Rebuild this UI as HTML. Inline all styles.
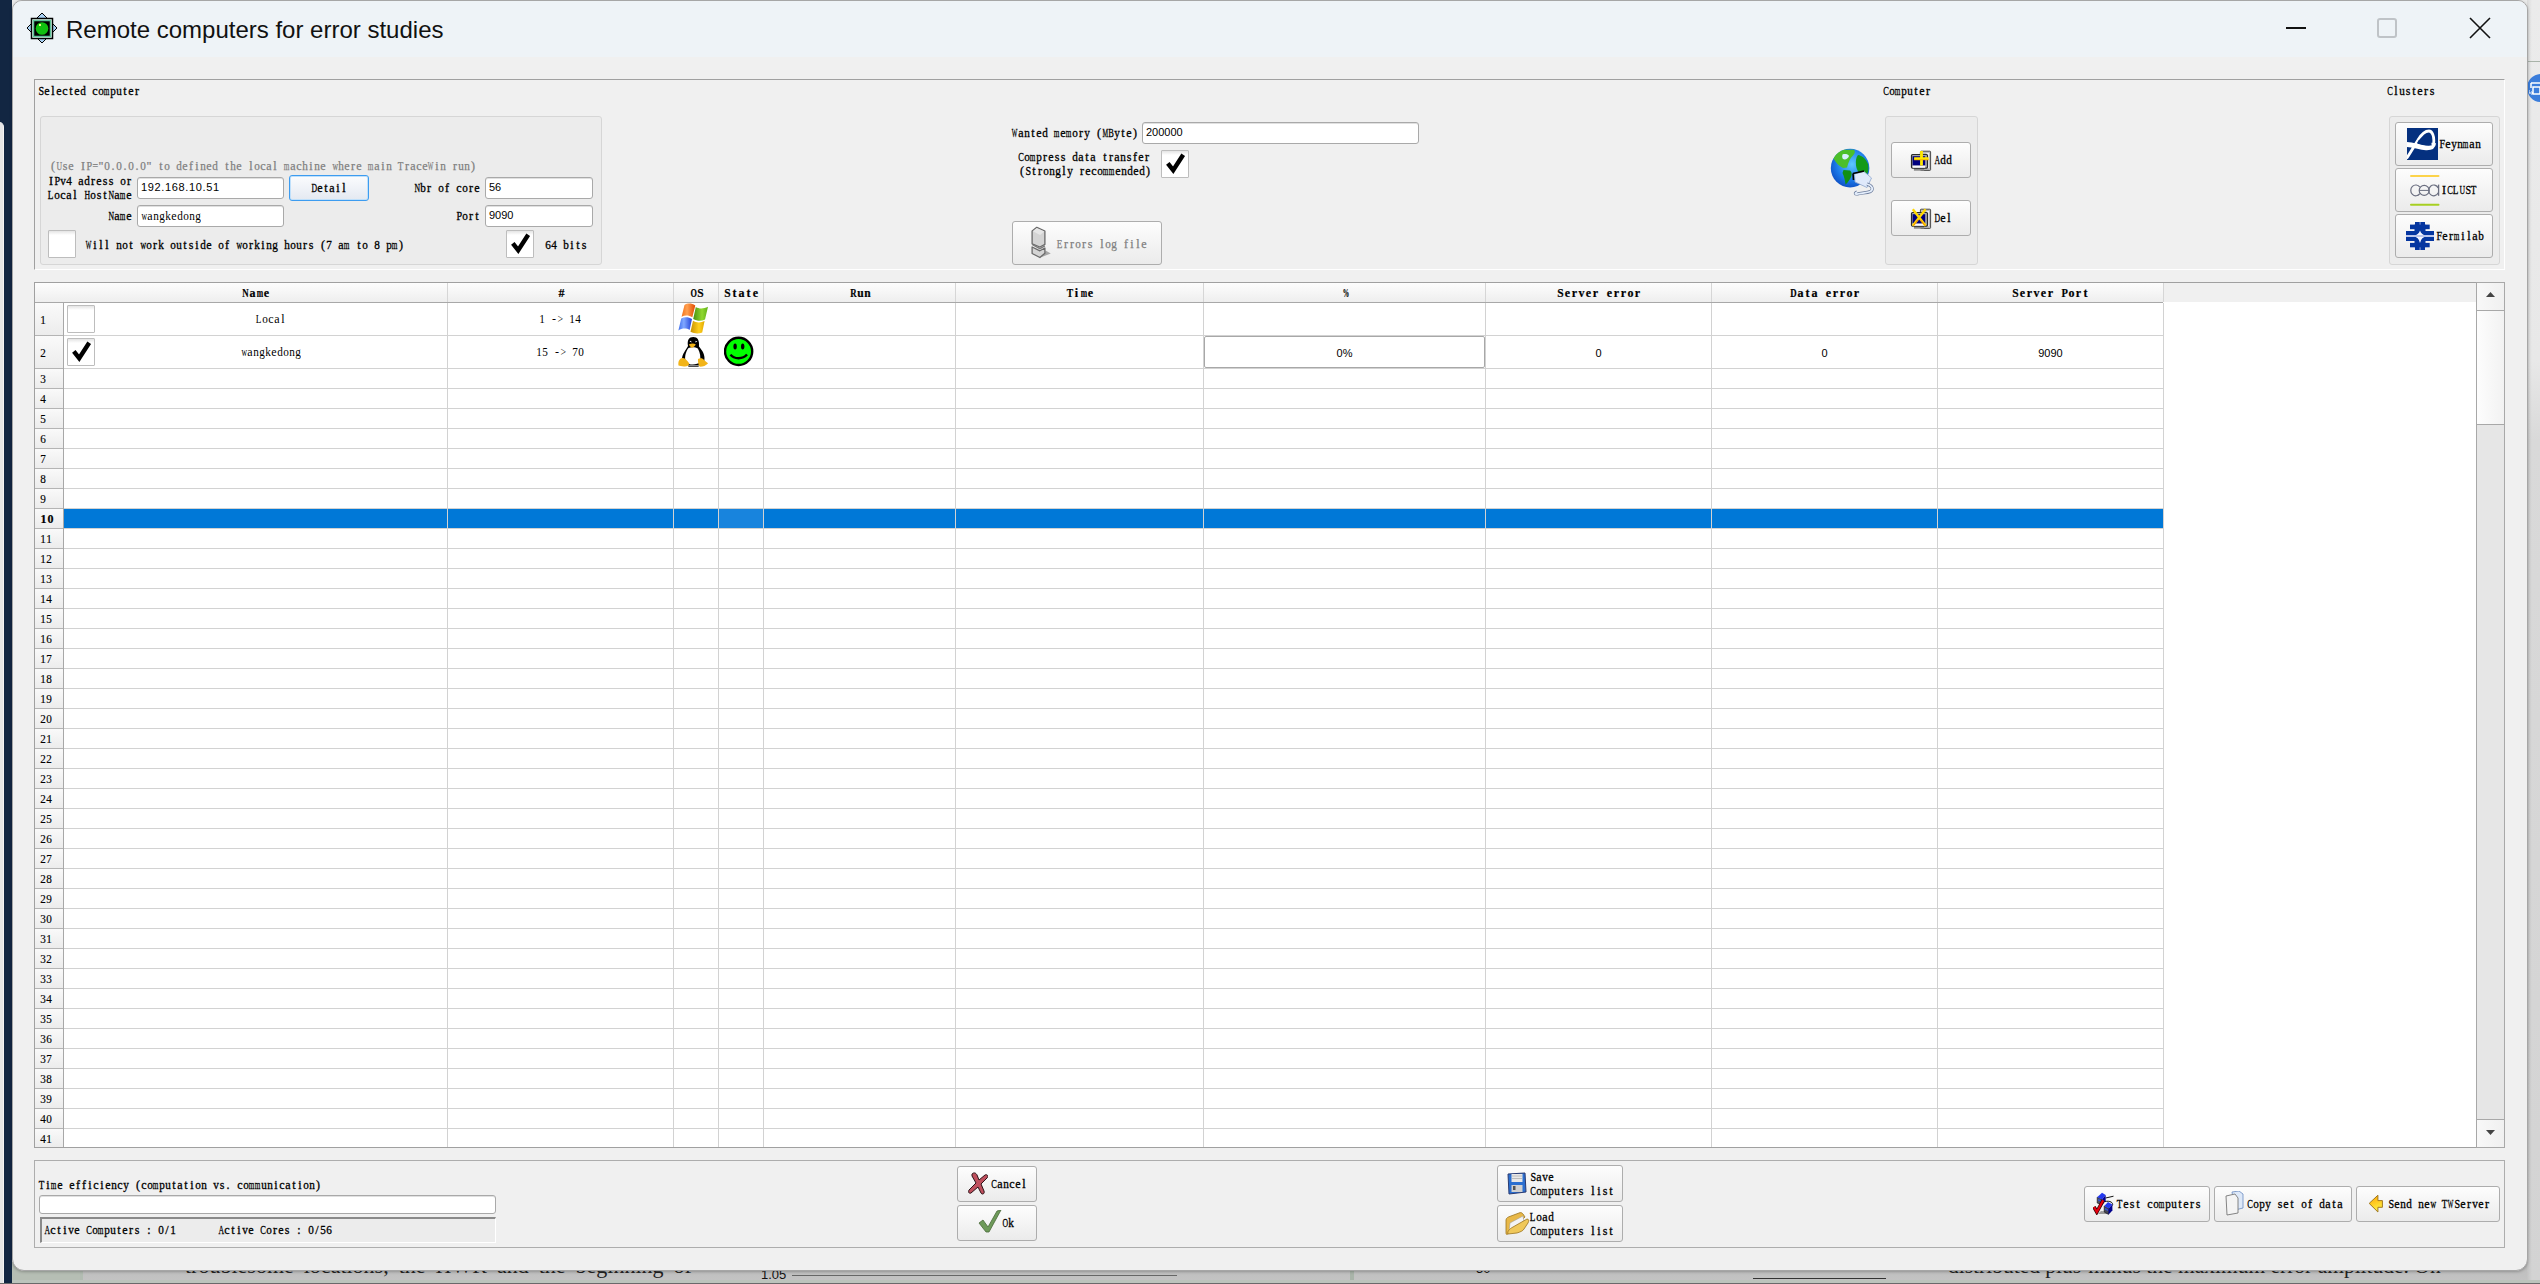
<!DOCTYPE html>
<html><head><meta charset="utf-8"><style>
*{margin:0;padding:0;box-sizing:border-box}
html,body{width:2540px;height:1284px;overflow:hidden;background:#e9e9e9;position:relative}
div{position:absolute}
.t,.tb,.tn{white-space:pre;line-height:12px;height:12px;font-family:"Liberation Serif",serif;font-size:12px;color:#000}
.t i,.tn i{display:inline-block;width:6px;text-align:center;font-style:normal}
.tb i{display:inline-block;width:7px;text-align:center;font-style:normal}
.t b,.tn b,.tb b{display:inline-block;font-weight:inherit}
.t{-webkit-text-stroke:0.3px #000}
.tb{font-weight:bold;-webkit-text-stroke:0.2px #000}
.tn{}
.td{white-space:pre;line-height:10px;height:10px;font-family:"Liberation Sans",sans-serif;font-size:11px;color:#000}
.btn{border:1px solid #adadad;border-radius:3px;background:linear-gradient(#fdfdfd,#ebebeb)}
.inp{border:1px solid #a9a9a9;border-radius:3px;background:#fff;box-shadow:inset 0 1px 0 #e0e0e0}
.chk{border:1px solid #bdbdbd;border-radius:1px;background:linear-gradient(#e4e4e4,#ffffff 4px,#ffffff)}
.sub{border:1px solid #d6d6d6;border-radius:3px;background:#ececec}
</style></head><body>
<div style="left:0px;top:0px;width:12px;height:1284px;background:#122642"></div>
<div style="left:-4px;top:122px;width:8px;height:1162px;background:#e6e6e6;border-radius:0 5px 0 0;border-right:1px solid #f4f4f4"></div>
<div style="left:2527px;top:0px;width:13px;height:1284px;background:linear-gradient(#ebebeb 0,#e8e8e8 360px,#d9d9d9 440px,#d3d3d3 100%)"></div>
<div style="left:2527px;top:0px;width:5px;height:1284px;background:linear-gradient(90deg,rgba(0,0,0,0.08),rgba(0,0,0,0))"></div>
<div style="left:2527px;top:61px;width:13px;height:1px;background:#a9b3a9"></div>
<div style="left:2527px;top:74px;width:28px;height:28px;border-radius:50%;background:#3b7ddb"></div>
<svg style="position:absolute;left:2529px;top:80px" width="11" height="16" viewBox="0 0 11 16"><path d="M2 3 H11 M2 3 V8 M4 7 H11 V14 H4 Z" fill="none" stroke="#fff" stroke-width="1.5"/><path d="M0 10 V13 H4 M2.5 11.5 L4 13 L2.5 14.5" fill="none" stroke="#fff" stroke-width="1"/></svg>
<div style="left:12px;top:1262px;width:2515px;height:22px;background:linear-gradient(#bdbdbd,#c4c4c4)"></div>
<div style="left:12px;top:1262px;width:68px;height:22px;background:#b6beb4"></div>
<div style="left:80px;top:1262px;width:3px;height:22px;background:#b2bcb2"></div>
<div style="left:185px;top:1253px;font:22px 'Liberation Serif',serif;line-height:26px;color:#222;white-space:pre;word-spacing:4.5px">troublesome locations, the HWR and the beginning of</div>
<div style="left:1948px;top:1253px;font:21.5px 'Liberation Serif',serif;line-height:26px;color:#222;white-space:pre;word-spacing:0px">distributed plus-minus the maximum error amplitude. On</div>
<div style="left:761px;top:1268px;font:13px 'Liberation Sans',sans-serif;line-height:14px;color:#111;white-space:pre">1.05</div>
<div style="left:792px;top:1275px;width:385px;height:1px;background:#666"></div>
<div style="left:1350px;top:1268px;width:4px;height:16px;background:#a9b4a9"></div>
<div style="left:1476px;top:1262px;font:13px 'Liberation Sans',sans-serif;line-height:14px;color:#111;white-space:pre">50</div>
<div style="left:1753px;top:1278px;width:133px;height:1px;background:#333"></div>
<div style="left:12px;top:1280px;width:2528px;height:3px;background:#bcc4bc"></div>
<div style="left:0px;top:1283px;width:2540px;height:1px;background:#6a6a6a"></div>
<div style="left:12px;top:0px;width:2516px;height:1271px;border:1px solid #a6a6a6;border-radius:10px 10px 12px 12px;box-shadow:0 1px 3px rgba(0,0,0,0.25);background:#f0f0f0;overflow:hidden"><div style="left:0;top:0;width:2514px;height:56px;background:#eef3f7"></div></div>
<svg style="position:absolute;left:26px;top:12px" width="32" height="32" viewBox="0 0 32 32"><path d="M16 1 L31 16 L16 31 L1 16 Z" fill="#a9d1f5" stroke="#000" stroke-width="1"/><rect x="5.5" y="6.5" width="21" height="20" fill="#fff" stroke="#000" stroke-width="1.5"/><rect x="7.5" y="8.5" width="17" height="16" fill="#000" stroke="#5fc59a" stroke-width="1.5"/><circle cx="16" cy="16.5" r="6.3" fill="#10c010"/><rect x="13" y="12" width="2" height="2" fill="#e8ff80"/></svg>
<div style="left:66px;top:16px;font:24px 'Liberation Sans',sans-serif;line-height:27px;color:#111;white-space:pre">Remote computers for error studies</div>
<div style="left:2286px;top:27px;width:20px;height:2px;background:#111"></div>
<div style="left:2377px;top:18px;width:20px;height:20px;border:2px solid #bfc3c7;border-radius:3px"></div>
<svg style="position:absolute;left:2469px;top:17px" width="22" height="22" viewBox="0 0 22 22"><path d="M1 1 L21 21 M21 1 L1 21" stroke="#111" stroke-width="1.6"/></svg>
<div style="left:34px;top:79px;width:2471px;height:191px;border-top:1px solid #a0a0a0;border-left:1px solid #a0a0a0;border-right:1px solid #fff;border-bottom:1px solid #fff"></div>
<div class="t" style="left:38px;top:85px;"><i><b style="margin-left:-0.34px;margin-right:-0.34px;transform:scaleX(0.839)">S</b></i><i>e</i><i>l</i><i>e</i><i>c</i><i>t</i><i>e</i><i><b style="margin-left:-0.00px;margin-right:-0.00px;transform:scaleX(0.933)">d</b></i><i> </i><i>c</i><i><b style="margin-left:-0.00px;margin-right:-0.00px;transform:scaleX(0.933)">o</b></i><i><b style="margin-left:-1.66px;margin-right:-1.66px;transform:scaleX(0.600)">m</b></i><i><b style="margin-left:-0.00px;margin-right:-0.00px;transform:scaleX(0.933)">p</b></i><i><b style="margin-left:-0.00px;margin-right:-0.00px;transform:scaleX(0.933)">u</b></i><i>t</i><i>e</i><i>r</i></div>
<div class="t" style="left:1883px;top:85px;"><i><b style="margin-left:-1.00px;margin-right:-1.00px;transform:scaleX(0.700)">C</b></i><i><b style="margin-left:-0.00px;margin-right:-0.00px;transform:scaleX(0.933)">o</b></i><i><b style="margin-left:-1.66px;margin-right:-1.66px;transform:scaleX(0.600)">m</b></i><i><b style="margin-left:-0.00px;margin-right:-0.00px;transform:scaleX(0.933)">p</b></i><i><b style="margin-left:-0.00px;margin-right:-0.00px;transform:scaleX(0.933)">u</b></i><i>t</i><i>e</i><i>r</i></div>
<div class="t" style="left:2387px;top:85px;"><i><b style="margin-left:-1.00px;margin-right:-1.00px;transform:scaleX(0.700)">C</b></i><i>l</i><i><b style="margin-left:-0.00px;margin-right:-0.00px;transform:scaleX(0.933)">u</b></i><i>s</i><i>t</i><i>e</i><i>r</i><i>s</i></div>
<div class="sub" style="left:40px;top:116px;width:562px;height:149px;"></div>
<div class="tn" style="left:50px;top:160px;color:#808080;-webkit-text-stroke:0.25px #808080"><i>(</i><i><b style="margin-left:-1.34px;margin-right:-1.34px;transform:scaleX(0.646)">U</b></i><i>s</i><i>e</i><i> </i><i>I</i><i><b style="margin-left:-0.34px;margin-right:-0.34px;transform:scaleX(0.839)">P</b></i><i><b style="margin-left:-0.38px;margin-right:-0.38px;transform:scaleX(0.828)">=</b></i><i>&quot;</i><i><b style="margin-left:-0.00px;margin-right:-0.00px;transform:scaleX(0.933)">0</b></i><i>.</i><i><b style="margin-left:-0.00px;margin-right:-0.00px;transform:scaleX(0.933)">0</b></i><i>.</i><i><b style="margin-left:-0.00px;margin-right:-0.00px;transform:scaleX(0.933)">0</b></i><i>.</i><i><b style="margin-left:-0.00px;margin-right:-0.00px;transform:scaleX(0.933)">0</b></i><i>&quot;</i><i> </i><i>t</i><i><b style="margin-left:-0.00px;margin-right:-0.00px;transform:scaleX(0.933)">o</b></i><i> </i><i><b style="margin-left:-0.00px;margin-right:-0.00px;transform:scaleX(0.933)">d</b></i><i>e</i><i>f</i><i>i</i><i><b style="margin-left:-0.00px;margin-right:-0.00px;transform:scaleX(0.933)">n</b></i><i>e</i><i><b style="margin-left:-0.00px;margin-right:-0.00px;transform:scaleX(0.933)">d</b></i><i> </i><i>t</i><i><b style="margin-left:-0.00px;margin-right:-0.00px;transform:scaleX(0.933)">h</b></i><i>e</i><i> </i><i>l</i><i><b style="margin-left:-0.00px;margin-right:-0.00px;transform:scaleX(0.933)">o</b></i><i>c</i><i>a</i><i>l</i><i> </i><i><b style="margin-left:-1.66px;margin-right:-1.66px;transform:scaleX(0.600)">m</b></i><i>a</i><i>c</i><i><b style="margin-left:-0.00px;margin-right:-0.00px;transform:scaleX(0.933)">h</b></i><i>i</i><i><b style="margin-left:-0.00px;margin-right:-0.00px;transform:scaleX(0.933)">n</b></i><i>e</i><i> </i><i><b style="margin-left:-1.34px;margin-right:-1.34px;transform:scaleX(0.646)">w</b></i><i><b style="margin-left:-0.00px;margin-right:-0.00px;transform:scaleX(0.933)">h</b></i><i>e</i><i>r</i><i>e</i><i> </i><i><b style="margin-left:-1.66px;margin-right:-1.66px;transform:scaleX(0.600)">m</b></i><i>a</i><i>i</i><i><b style="margin-left:-0.00px;margin-right:-0.00px;transform:scaleX(0.933)">n</b></i><i> </i><i><b style="margin-left:-0.66px;margin-right:-0.66px;transform:scaleX(0.764)">T</b></i><i>r</i><i>a</i><i>c</i><i>e</i><i><b style="margin-left:-2.66px;margin-right:-2.66px;transform:scaleX(0.494)">W</b></i><i>i</i><i><b style="margin-left:-0.00px;margin-right:-0.00px;transform:scaleX(0.933)">n</b></i><i> </i><i>r</i><i><b style="margin-left:-0.00px;margin-right:-0.00px;transform:scaleX(0.933)">u</b></i><i><b style="margin-left:-0.00px;margin-right:-0.00px;transform:scaleX(0.933)">n</b></i><i>)</i></div>
<div class="t" style="left:48px;top:175px;"><i>I</i><i><b style="margin-left:-0.34px;margin-right:-0.34px;transform:scaleX(0.839)">P</b></i><i><b style="margin-left:-0.00px;margin-right:-0.00px;transform:scaleX(0.933)">v</b></i><i><b style="margin-left:-0.00px;margin-right:-0.00px;transform:scaleX(0.933)">4</b></i><i> </i><i>a</i><i><b style="margin-left:-0.00px;margin-right:-0.00px;transform:scaleX(0.933)">d</b></i><i>r</i><i>e</i><i>s</i><i>s</i><i> </i><i><b style="margin-left:-0.00px;margin-right:-0.00px;transform:scaleX(0.933)">o</b></i><i>r</i></div>
<div class="t" style="left:48px;top:189px;"><i><b style="margin-left:-0.66px;margin-right:-0.66px;transform:scaleX(0.764)">L</b></i><i><b style="margin-left:-0.00px;margin-right:-0.00px;transform:scaleX(0.933)">o</b></i><i>c</i><i>a</i><i>l</i><i> </i><i><b style="margin-left:-1.34px;margin-right:-1.34px;transform:scaleX(0.646)">H</b></i><i><b style="margin-left:-0.00px;margin-right:-0.00px;transform:scaleX(0.933)">o</b></i><i>s</i><i>t</i><i><b style="margin-left:-1.34px;margin-right:-1.34px;transform:scaleX(0.646)">N</b></i><i>a</i><i><b style="margin-left:-1.66px;margin-right:-1.66px;transform:scaleX(0.600)">m</b></i><i>e</i></div>
<div class="inp" style="left:137px;top:177px;width:147px;height:22px;"></div>
<div class="td" style="left:141px;top:182px;letter-spacing:0.65px">192.168.10.51</div>
<div style="left:289px;top:175px;width:80px;height:26px;border:1px solid #3d9cf0;border-radius:3px;background:linear-gradient(#fbfcfe,#e4e9f1);box-shadow:inset 0 0 0 1px #bfe0fb"></div>
<div class="t" style="left:311px;top:182px;"><i><b style="margin-left:-1.34px;margin-right:-1.34px;transform:scaleX(0.646)">D</b></i><i>e</i><i>t</i><i>a</i><i>i</i><i>l</i></div>
<div class="t" style="left:108px;top:210px;"><i><b style="margin-left:-1.34px;margin-right:-1.34px;transform:scaleX(0.646)">N</b></i><i>a</i><i><b style="margin-left:-1.66px;margin-right:-1.66px;transform:scaleX(0.600)">m</b></i><i>e</i></div>
<div class="inp" style="left:137px;top:205px;width:147px;height:22px;"></div>
<div class="tn" style="left:141px;top:210px;"><i><b style="margin-left:-1.34px;margin-right:-1.34px;transform:scaleX(0.646)">w</b></i><i>a</i><i><b style="margin-left:-0.00px;margin-right:-0.00px;transform:scaleX(0.933)">n</b></i><i><b style="margin-left:-0.00px;margin-right:-0.00px;transform:scaleX(0.933)">g</b></i><i><b style="margin-left:-0.00px;margin-right:-0.00px;transform:scaleX(0.933)">k</b></i><i>e</i><i><b style="margin-left:-0.00px;margin-right:-0.00px;transform:scaleX(0.933)">d</b></i><i><b style="margin-left:-0.00px;margin-right:-0.00px;transform:scaleX(0.933)">o</b></i><i><b style="margin-left:-0.00px;margin-right:-0.00px;transform:scaleX(0.933)">n</b></i><i><b style="margin-left:-0.00px;margin-right:-0.00px;transform:scaleX(0.933)">g</b></i></div>
<div class="t" style="left:414px;top:182px;"><i><b style="margin-left:-1.34px;margin-right:-1.34px;transform:scaleX(0.646)">N</b></i><i><b style="margin-left:-0.00px;margin-right:-0.00px;transform:scaleX(0.933)">b</b></i><i>r</i><i> </i><i><b style="margin-left:-0.00px;margin-right:-0.00px;transform:scaleX(0.933)">o</b></i><i>f</i><i> </i><i>c</i><i><b style="margin-left:-0.00px;margin-right:-0.00px;transform:scaleX(0.933)">o</b></i><i>r</i><i>e</i></div>
<div class="inp" style="left:485px;top:177px;width:108px;height:22px;"></div>
<div class="td" style="left:489px;top:182px;">56</div>
<div class="t" style="left:456px;top:210px;"><i><b style="margin-left:-0.34px;margin-right:-0.34px;transform:scaleX(0.839)">P</b></i><i><b style="margin-left:-0.00px;margin-right:-0.00px;transform:scaleX(0.933)">o</b></i><i>r</i><i>t</i></div>
<div class="inp" style="left:485px;top:205px;width:108px;height:22px;"></div>
<div class="td" style="left:489px;top:210px;">9090</div>
<div class="chk" style="left:48px;top:230px;width:28px;height:28px;"></div>
<div class="t" style="left:86px;top:239px;"><i><b style="margin-left:-2.66px;margin-right:-2.66px;transform:scaleX(0.494)">W</b></i><i>i</i><i>l</i><i>l</i><i> </i><i><b style="margin-left:-0.00px;margin-right:-0.00px;transform:scaleX(0.933)">n</b></i><i><b style="margin-left:-0.00px;margin-right:-0.00px;transform:scaleX(0.933)">o</b></i><i>t</i><i> </i><i><b style="margin-left:-1.34px;margin-right:-1.34px;transform:scaleX(0.646)">w</b></i><i><b style="margin-left:-0.00px;margin-right:-0.00px;transform:scaleX(0.933)">o</b></i><i>r</i><i><b style="margin-left:-0.00px;margin-right:-0.00px;transform:scaleX(0.933)">k</b></i><i> </i><i><b style="margin-left:-0.00px;margin-right:-0.00px;transform:scaleX(0.933)">o</b></i><i><b style="margin-left:-0.00px;margin-right:-0.00px;transform:scaleX(0.933)">u</b></i><i>t</i><i>s</i><i>i</i><i><b style="margin-left:-0.00px;margin-right:-0.00px;transform:scaleX(0.933)">d</b></i><i>e</i><i> </i><i><b style="margin-left:-0.00px;margin-right:-0.00px;transform:scaleX(0.933)">o</b></i><i>f</i><i> </i><i><b style="margin-left:-1.34px;margin-right:-1.34px;transform:scaleX(0.646)">w</b></i><i><b style="margin-left:-0.00px;margin-right:-0.00px;transform:scaleX(0.933)">o</b></i><i>r</i><i><b style="margin-left:-0.00px;margin-right:-0.00px;transform:scaleX(0.933)">k</b></i><i>i</i><i><b style="margin-left:-0.00px;margin-right:-0.00px;transform:scaleX(0.933)">n</b></i><i><b style="margin-left:-0.00px;margin-right:-0.00px;transform:scaleX(0.933)">g</b></i><i> </i><i><b style="margin-left:-0.00px;margin-right:-0.00px;transform:scaleX(0.933)">h</b></i><i><b style="margin-left:-0.00px;margin-right:-0.00px;transform:scaleX(0.933)">o</b></i><i><b style="margin-left:-0.00px;margin-right:-0.00px;transform:scaleX(0.933)">u</b></i><i>r</i><i>s</i><i> </i><i>(</i><i><b style="margin-left:-0.00px;margin-right:-0.00px;transform:scaleX(0.933)">7</b></i><i> </i><i>a</i><i><b style="margin-left:-1.66px;margin-right:-1.66px;transform:scaleX(0.600)">m</b></i><i> </i><i>t</i><i><b style="margin-left:-0.00px;margin-right:-0.00px;transform:scaleX(0.933)">o</b></i><i> </i><i><b style="margin-left:-0.00px;margin-right:-0.00px;transform:scaleX(0.933)">8</b></i><i> </i><i><b style="margin-left:-0.00px;margin-right:-0.00px;transform:scaleX(0.933)">p</b></i><i><b style="margin-left:-1.66px;margin-right:-1.66px;transform:scaleX(0.600)">m</b></i><i>)</i></div>
<div class="chk" style="left:506px;top:230px;width:28px;height:28px;"></div>
<svg style="position:absolute;left:506px;top:230px" width="28" height="28" viewBox="0 0 28 28"><path d="M6.8 13.4 L12.2 20.2 L22.2 4.8" fill="none" stroke="#000" stroke-width="4.4" stroke-linecap="butt" stroke-linejoin="miter" stroke-miterlimit="3"/></svg>
<div class="t" style="left:545px;top:239px;"><i><b style="margin-left:-0.00px;margin-right:-0.00px;transform:scaleX(0.933)">6</b></i><i><b style="margin-left:-0.00px;margin-right:-0.00px;transform:scaleX(0.933)">4</b></i><i> </i><i><b style="margin-left:-0.00px;margin-right:-0.00px;transform:scaleX(0.933)">b</b></i><i>i</i><i>t</i><i>s</i></div>
<div class="t" style="left:1012px;top:127px;"><i><b style="margin-left:-2.66px;margin-right:-2.66px;transform:scaleX(0.494)">W</b></i><i>a</i><i><b style="margin-left:-0.00px;margin-right:-0.00px;transform:scaleX(0.933)">n</b></i><i>t</i><i>e</i><i><b style="margin-left:-0.00px;margin-right:-0.00px;transform:scaleX(0.933)">d</b></i><i> </i><i><b style="margin-left:-1.66px;margin-right:-1.66px;transform:scaleX(0.600)">m</b></i><i>e</i><i><b style="margin-left:-1.66px;margin-right:-1.66px;transform:scaleX(0.600)">m</b></i><i><b style="margin-left:-0.00px;margin-right:-0.00px;transform:scaleX(0.933)">o</b></i><i>r</i><i><b style="margin-left:-0.00px;margin-right:-0.00px;transform:scaleX(0.933)">y</b></i><i> </i><i>(</i><i><b style="margin-left:-2.34px;margin-right:-2.34px;transform:scaleX(0.525)">M</b></i><i><b style="margin-left:-1.00px;margin-right:-1.00px;transform:scaleX(0.700)">B</b></i><i><b style="margin-left:-0.00px;margin-right:-0.00px;transform:scaleX(0.933)">y</b></i><i>t</i><i>e</i><i>)</i></div>
<div class="inp" style="left:1142px;top:122px;width:277px;height:22px;"></div>
<div class="td" style="left:1146px;top:127px;">200000</div>
<div class="t" style="left:1018px;top:151px;"><i><b style="margin-left:-1.00px;margin-right:-1.00px;transform:scaleX(0.700)">C</b></i><i><b style="margin-left:-0.00px;margin-right:-0.00px;transform:scaleX(0.933)">o</b></i><i><b style="margin-left:-1.66px;margin-right:-1.66px;transform:scaleX(0.600)">m</b></i><i><b style="margin-left:-0.00px;margin-right:-0.00px;transform:scaleX(0.933)">p</b></i><i>r</i><i>e</i><i>s</i><i>s</i><i> </i><i><b style="margin-left:-0.00px;margin-right:-0.00px;transform:scaleX(0.933)">d</b></i><i>a</i><i>t</i><i>a</i><i> </i><i>t</i><i>r</i><i>a</i><i><b style="margin-left:-0.00px;margin-right:-0.00px;transform:scaleX(0.933)">n</b></i><i>s</i><i>f</i><i>e</i><i>r</i></div>
<div class="t" style="left:1019px;top:165px;"><i>(</i><i><b style="margin-left:-0.34px;margin-right:-0.34px;transform:scaleX(0.839)">S</b></i><i>t</i><i>r</i><i><b style="margin-left:-0.00px;margin-right:-0.00px;transform:scaleX(0.933)">o</b></i><i><b style="margin-left:-0.00px;margin-right:-0.00px;transform:scaleX(0.933)">n</b></i><i><b style="margin-left:-0.00px;margin-right:-0.00px;transform:scaleX(0.933)">g</b></i><i>l</i><i><b style="margin-left:-0.00px;margin-right:-0.00px;transform:scaleX(0.933)">y</b></i><i> </i><i>r</i><i>e</i><i>c</i><i><b style="margin-left:-0.00px;margin-right:-0.00px;transform:scaleX(0.933)">o</b></i><i><b style="margin-left:-1.66px;margin-right:-1.66px;transform:scaleX(0.600)">m</b></i><i><b style="margin-left:-1.66px;margin-right:-1.66px;transform:scaleX(0.600)">m</b></i><i>e</i><i><b style="margin-left:-0.00px;margin-right:-0.00px;transform:scaleX(0.933)">n</b></i><i><b style="margin-left:-0.00px;margin-right:-0.00px;transform:scaleX(0.933)">d</b></i><i>e</i><i><b style="margin-left:-0.00px;margin-right:-0.00px;transform:scaleX(0.933)">d</b></i><i>)</i></div>
<div class="chk" style="left:1161px;top:150px;width:28px;height:28px;"></div>
<svg style="position:absolute;left:1161px;top:150px" width="28" height="28" viewBox="0 0 28 28"><path d="M6.8 13.4 L12.2 20.2 L22.2 4.8" fill="none" stroke="#000" stroke-width="4.4" stroke-linecap="butt" stroke-linejoin="miter" stroke-miterlimit="3"/></svg>
<div class="btn" style="left:1012px;top:221px;width:150px;height:44px;"></div>
<svg style="position:absolute;left:1029px;top:226px" width="23" height="33" viewBox="0 0 23 33"><path d="M11.5 31.5 L21.8 27.5 L16.5 24.5 L15.9 27.5 Z" fill="#a6a6a6"/><path d="M3.1 5 L7.8 1.3 L15.9 5 L15.9 18.4 L10.9 21 L3.1 17.8 Z" fill="#d4d4d4" stroke="#6a6a6a" stroke-width="1.3" stroke-linejoin="round"/><path d="M3.8 5.3 L7.8 2 L15.2 5.4 L11.2 9 Z" fill="#e6e6e6"/><path d="M3.1 21 L10.9 24.8 L15.9 22 L15.9 27.2 L10.9 31.5 L3.1 27.5 Z" fill="#d4d4d4" stroke="#6a6a6a" stroke-width="1.3" stroke-linejoin="round"/><path d="M3.1 18.5 L10.9 22.6 L15.9 19.8" fill="none" stroke="#7a7a7a" stroke-width="1.4"/></svg>
<div class="tn" style="left:1057px;top:238px;color:#808080;-webkit-text-stroke:0.25px #808080"><i><b style="margin-left:-0.66px;margin-right:-0.66px;transform:scaleX(0.764)">E</b></i><i>r</i><i>r</i><i><b style="margin-left:-0.00px;margin-right:-0.00px;transform:scaleX(0.933)">o</b></i><i>r</i><i>s</i><i> </i><i>l</i><i><b style="margin-left:-0.00px;margin-right:-0.00px;transform:scaleX(0.933)">o</b></i><i><b style="margin-left:-0.00px;margin-right:-0.00px;transform:scaleX(0.933)">g</b></i><i> </i><i>f</i><i>i</i><i>l</i><i>e</i></div>
<svg style="position:absolute;left:1830px;top:148px" width="46" height="49" viewBox="0 0 46 49"><defs><radialGradient id="gg" cx="0.55" cy="0.4" r="0.75"><stop offset="0" stop-color="#5ec8ff"/><stop offset="0.55" stop-color="#1a78e8"/><stop offset="1" stop-color="#0838b0"/></radialGradient></defs><circle cx="20.1" cy="20.1" r="19.3" fill="url(#gg)"/><path d="M3.5 10.5 C6 6 10 3 14 1.8 L24 1.8 C25 3 25.5 5 23 7.5 C20 10 18.5 14 17 19.5 L13 20 C9 18 6 15 3.5 10.5Z" fill="#4cbf2a"/><path d="M12.5 6.5 C15 5.5 18 6 19 8 C18 11 15 12 13 11 C12 9.5 12 8 12.5 6.5Z" fill="#d8f0ff"/><path d="M13.5 22 L20 22.5 C22 24 22.5 27 20 31 C18 34 16.5 36 15.5 36.5 C15 32 14 28 12.5 25Z" fill="#129012"/><path d="M28 7 C32 7.5 36 11 38 16 C39 21 38 25 36.5 27 L31 26 C28 24.5 26.5 21 26 17.5 C25.5 13 26 9.5 28 7Z" fill="#139a18"/><path d="M24.5 26 L34 23.5 L41.5 30 L37 39.5 L25 34 Z" fill="#dfe9fb" stroke="#8ea6cc" stroke-width="0.8"/><path d="M23 25.5 L23.5 32 M23 25.5 L34 23" stroke="#000" stroke-width="1.6"/><path d="M37 36 C42 37.5 44 41 40.5 43.5 C37 45 31 45 27.5 46 C25 46.5 24.5 45 27 44" fill="none" stroke="#6a7a9a" stroke-width="3"/><path d="M37 36 C42 37.5 44 41 40.5 43.5 C37 45 31 45 27.5 46 C25 46.5 24.5 45 27 44" fill="none" stroke="#e4eefc" stroke-width="1.8"/></svg>
<div class="sub" style="left:1885px;top:116px;width:93px;height:149px;"></div>
<div class="btn" style="left:1891px;top:142px;width:80px;height:36px;"></div>
<svg style="position:absolute;left:1910px;top:150px" width="22" height="22" viewBox="0 0 22 22"><rect x="10.4" y="1.2" width="10.2" height="19.2" rx="0.8" fill="#bdbdbd" stroke="#3a3a3a" stroke-width="0.9"/><rect x="16.5" y="3" width="2.5" height="15" fill="#f0f0f0"/><rect x="3.9" y="18" width="10.3" height="2.7" fill="#8a8a8a"/><rect x="1.5" y="4.5" width="16" height="13.6" rx="1" fill="#a8a8a8" stroke="#2a2a2a" stroke-width="1.2"/><rect x="2.6" y="6.2" width="12.6" height="9.4" fill="#000080"/><rect x="2.6" y="15.6" width="12.6" height="2.2" fill="#fafafa"/><path d="M4.1 8.7 H18.6 M11.5 1.1 V15.6" stroke="#ffe800" stroke-width="2.8"/><path d="M4.1 9.8 H18.6" stroke="#f0a000" stroke-width="0.8"/></svg>
<div class="t" style="left:1934px;top:154px;"><i><b style="margin-left:-1.34px;margin-right:-1.34px;transform:scaleX(0.646)">A</b></i><i><b style="margin-left:-0.00px;margin-right:-0.00px;transform:scaleX(0.933)">d</b></i><i><b style="margin-left:-0.00px;margin-right:-0.00px;transform:scaleX(0.933)">d</b></i></div>
<div class="btn" style="left:1891px;top:200px;width:80px;height:36px;"></div>
<svg style="position:absolute;left:1910px;top:208px" width="22" height="22" viewBox="0 0 22 22"><rect x="10.4" y="1.2" width="10.2" height="19.2" rx="0.8" fill="#bdbdbd" stroke="#3a3a3a" stroke-width="0.9"/><rect x="16.5" y="3" width="2.5" height="15" fill="#f0f0f0"/><rect x="3.9" y="18" width="10.3" height="2.7" fill="#8a8a8a"/><rect x="1.5" y="4.5" width="16" height="13.6" rx="1" fill="#a8a8a8" stroke="#2a2a2a" stroke-width="1.2"/><rect x="2.6" y="6.2" width="12.6" height="9.4" fill="#000080"/><rect x="2.6" y="15.6" width="12.6" height="2.2" fill="#fafafa"/><path d="M2.8 1.2 L15.6 17.8 M15.6 1.2 L2.8 17.8" stroke="#ffd800" stroke-width="2.4"/><path d="M3.4 17.6 L8 11.8 M15 17.6 L10.4 11.8" stroke="#f08000" stroke-width="1"/></svg>
<div class="t" style="left:1934px;top:212px;"><i><b style="margin-left:-1.34px;margin-right:-1.34px;transform:scaleX(0.646)">D</b></i><i>e</i><i>l</i></div>
<div class="sub" style="left:2389px;top:116px;width:111px;height:149px;"></div>
<div class="btn" style="left:2395px;top:122px;width:98px;height:44px;"></div>
<svg style="position:absolute;left:2407px;top:128px" width="31" height="32" viewBox="0 0 31 32"><rect x="0" y="0" width="31" height="32" fill="#05307f"/><path d="M-1 16.6 C6 16.2 12 19.6 19 19.8 C23.5 20 26.2 18.5 26.6 15" fill="none" stroke="#fff" stroke-width="5"/><path d="M26.6 15.5 C27.6 8 25 3 22 3 C18 3 14 7 11 12 C7.5 17.5 4 24 -0.5 30.5" fill="none" stroke="#fff" stroke-width="2.8"/><path d="M10 15 C12 11 16 7.5 20 8 C23 8.5 24.5 13 24.6 17.5 C20 18 14 17 10 15Z" fill="#05307f"/></svg>
<div class="t" style="left:2439px;top:138px;"><i><b style="margin-left:-0.34px;margin-right:-0.34px;transform:scaleX(0.839)">F</b></i><i>e</i><i><b style="margin-left:-0.00px;margin-right:-0.00px;transform:scaleX(0.933)">y</b></i><i><b style="margin-left:-0.00px;margin-right:-0.00px;transform:scaleX(0.933)">n</b></i><i><b style="margin-left:-1.66px;margin-right:-1.66px;transform:scaleX(0.600)">m</b></i><i>a</i><i><b style="margin-left:-0.00px;margin-right:-0.00px;transform:scaleX(0.933)">n</b></i></div>
<div class="btn" style="left:2395px;top:168px;width:98px;height:44px;"></div>
<svg style="position:absolute;left:2410px;top:175px" width="30" height="31" viewBox="0 0 30 31"><rect x="0" y="0" width="29.5" height="2" rx="1" fill="#fcd34a"/><rect x="0" y="28.7" width="29.5" height="2" rx="1" fill="#a6cf22"/><path d="M9.8 12.2 A5 5.4 0 1 0 9.8 18.6" fill="none" stroke="#6b6f80" stroke-width="1.2"/><circle cx="14.2" cy="15.4" r="5" fill="none" stroke="#6b6f80" stroke-width="1.2"/><path d="M9.2 15.4 H19.2" stroke="#6b6f80" stroke-width="1"/><path d="M28.2 13 A5 5.4 0 1 0 28.2 17.8" fill="none" stroke="#6b6f80" stroke-width="1.2"/><path d="M28.6 9.6 V20.8" stroke="#6b6f80" stroke-width="1.3"/></svg>
<div class="t" style="left:2441px;top:184px;"><i>I</i><i><b style="margin-left:-1.00px;margin-right:-1.00px;transform:scaleX(0.700)">C</b></i><i><b style="margin-left:-0.66px;margin-right:-0.66px;transform:scaleX(0.764)">L</b></i><i><b style="margin-left:-1.34px;margin-right:-1.34px;transform:scaleX(0.646)">U</b></i><i><b style="margin-left:-0.34px;margin-right:-0.34px;transform:scaleX(0.839)">S</b></i><i><b style="margin-left:-0.66px;margin-right:-0.66px;transform:scaleX(0.764)">T</b></i></div>
<div class="btn" style="left:2395px;top:214px;width:98px;height:44px;"></div>
<svg style="position:absolute;left:2406px;top:222px" width="28" height="28" viewBox="0 0 28 28"><rect x="9" y="0" width="10" height="3" fill="#0536a0"/><rect x="4" y="2.6" width="19.7" height="4.6" fill="#0536a0"/><rect x="0" y="9" width="28" height="4.1" fill="#0536a0"/><rect x="0" y="15" width="28" height="4" fill="#0536a0"/><rect x="4" y="20.9" width="19.7" height="4.4" fill="#0536a0"/><rect x="9" y="25" width="10" height="3" fill="#0536a0"/><rect x="8.5" y="2.6" width="11" height="22.5" fill="#0536a0"/><path d="M14 8.4 Q15.2 12.8 21 14 Q15.2 15.2 14 20.9 Q12.8 15.2 7.1 14 Q12.8 12.8 14 8.4 Z" fill="#f4f6ff"/><rect x="0" y="13.1" width="28" height="1.8" fill="#b8c4ec"/><rect x="13.6" y="0" width="0.9" height="2.6" fill="#9fb0e0"/><rect x="13.6" y="25.3" width="0.9" height="2.7" fill="#9fb0e0"/></svg>
<div class="t" style="left:2436px;top:230px;"><i><b style="margin-left:-0.34px;margin-right:-0.34px;transform:scaleX(0.839)">F</b></i><i>e</i><i>r</i><i><b style="margin-left:-1.66px;margin-right:-1.66px;transform:scaleX(0.600)">m</b></i><i>i</i><i>l</i><i>a</i><i><b style="margin-left:-0.00px;margin-right:-0.00px;transform:scaleX(0.933)">b</b></i></div>
<div style="left:34px;top:282px;width:2471px;height:866px;border:1px solid #a0a0a0;background:#fff"></div>
<div style="left:35px;top:283px;width:2441px;height:19px;background:#f0f0f0"></div>
<div style="left:35px;top:283px;width:2128px;height:19px;background:linear-gradient(#fdfdfd,#eeeeee)"></div>
<div style="left:35px;top:302px;width:2128px;height:1px;background:#a8a8a8"></div>
<div style="left:35px;top:303px;width:28px;height:844px;background:linear-gradient(90deg,#f4f4f4,#f4f4f4)"></div>
<div style="left:35px;top:303px;width:28px;height:32px;background:linear-gradient(#fafafa,#ececec)"></div>
<div style="left:35px;top:336px;width:28px;height:32px;background:linear-gradient(#fafafa,#ececec)"></div>
<div style="left:35px;top:368px;width:28px;height:20px;background:linear-gradient(#fafafa,#ececec)"></div>
<div style="left:35px;top:388px;width:28px;height:20px;background:linear-gradient(#fafafa,#ececec)"></div>
<div style="left:35px;top:408px;width:28px;height:20px;background:linear-gradient(#fafafa,#ececec)"></div>
<div style="left:35px;top:428px;width:28px;height:20px;background:linear-gradient(#fafafa,#ececec)"></div>
<div style="left:35px;top:448px;width:28px;height:20px;background:linear-gradient(#fafafa,#ececec)"></div>
<div style="left:35px;top:468px;width:28px;height:20px;background:linear-gradient(#fafafa,#ececec)"></div>
<div style="left:35px;top:488px;width:28px;height:20px;background:linear-gradient(#fafafa,#ececec)"></div>
<div style="left:35px;top:508px;width:28px;height:20px;background:linear-gradient(#fafafa,#ececec)"></div>
<div style="left:35px;top:528px;width:28px;height:20px;background:linear-gradient(#fafafa,#ececec)"></div>
<div style="left:35px;top:548px;width:28px;height:20px;background:linear-gradient(#fafafa,#ececec)"></div>
<div style="left:35px;top:568px;width:28px;height:20px;background:linear-gradient(#fafafa,#ececec)"></div>
<div style="left:35px;top:588px;width:28px;height:20px;background:linear-gradient(#fafafa,#ececec)"></div>
<div style="left:35px;top:608px;width:28px;height:20px;background:linear-gradient(#fafafa,#ececec)"></div>
<div style="left:35px;top:628px;width:28px;height:20px;background:linear-gradient(#fafafa,#ececec)"></div>
<div style="left:35px;top:648px;width:28px;height:20px;background:linear-gradient(#fafafa,#ececec)"></div>
<div style="left:35px;top:668px;width:28px;height:20px;background:linear-gradient(#fafafa,#ececec)"></div>
<div style="left:35px;top:688px;width:28px;height:20px;background:linear-gradient(#fafafa,#ececec)"></div>
<div style="left:35px;top:708px;width:28px;height:20px;background:linear-gradient(#fafafa,#ececec)"></div>
<div style="left:35px;top:728px;width:28px;height:20px;background:linear-gradient(#fafafa,#ececec)"></div>
<div style="left:35px;top:748px;width:28px;height:20px;background:linear-gradient(#fafafa,#ececec)"></div>
<div style="left:35px;top:768px;width:28px;height:20px;background:linear-gradient(#fafafa,#ececec)"></div>
<div style="left:35px;top:788px;width:28px;height:20px;background:linear-gradient(#fafafa,#ececec)"></div>
<div style="left:35px;top:808px;width:28px;height:20px;background:linear-gradient(#fafafa,#ececec)"></div>
<div style="left:35px;top:828px;width:28px;height:20px;background:linear-gradient(#fafafa,#ececec)"></div>
<div style="left:35px;top:848px;width:28px;height:20px;background:linear-gradient(#fafafa,#ececec)"></div>
<div style="left:35px;top:868px;width:28px;height:20px;background:linear-gradient(#fafafa,#ececec)"></div>
<div style="left:35px;top:888px;width:28px;height:20px;background:linear-gradient(#fafafa,#ececec)"></div>
<div style="left:35px;top:908px;width:28px;height:20px;background:linear-gradient(#fafafa,#ececec)"></div>
<div style="left:35px;top:928px;width:28px;height:20px;background:linear-gradient(#fafafa,#ececec)"></div>
<div style="left:35px;top:948px;width:28px;height:20px;background:linear-gradient(#fafafa,#ececec)"></div>
<div style="left:35px;top:968px;width:28px;height:20px;background:linear-gradient(#fafafa,#ececec)"></div>
<div style="left:35px;top:988px;width:28px;height:20px;background:linear-gradient(#fafafa,#ececec)"></div>
<div style="left:35px;top:1008px;width:28px;height:20px;background:linear-gradient(#fafafa,#ececec)"></div>
<div style="left:35px;top:1028px;width:28px;height:20px;background:linear-gradient(#fafafa,#ececec)"></div>
<div style="left:35px;top:1048px;width:28px;height:20px;background:linear-gradient(#fafafa,#ececec)"></div>
<div style="left:35px;top:1068px;width:28px;height:20px;background:linear-gradient(#fafafa,#ececec)"></div>
<div style="left:35px;top:1088px;width:28px;height:20px;background:linear-gradient(#fafafa,#ececec)"></div>
<div style="left:35px;top:1108px;width:28px;height:20px;background:linear-gradient(#fafafa,#ececec)"></div>
<div style="left:35px;top:1128px;width:28px;height:19px;background:linear-gradient(#fafafa,#ececec)"></div>
<div style="left:64px;top:508px;width:2099px;height:20px;background:#0078d7"></div>
<div style="left:719px;top:508px;width:44px;height:20px;background:#1884dd"></div>
<div style="left:35px;top:335px;width:28px;height:1px;background:#b4b4b4"></div>
<div style="left:64px;top:335px;width:2099px;height:1px;background:#d2d2d2"></div>
<div style="left:35px;top:368px;width:28px;height:1px;background:#b4b4b4"></div>
<div style="left:64px;top:368px;width:2099px;height:1px;background:#d2d2d2"></div>
<div style="left:35px;top:388px;width:28px;height:1px;background:#b4b4b4"></div>
<div style="left:64px;top:388px;width:2099px;height:1px;background:#d2d2d2"></div>
<div style="left:35px;top:408px;width:28px;height:1px;background:#b4b4b4"></div>
<div style="left:64px;top:408px;width:2099px;height:1px;background:#d2d2d2"></div>
<div style="left:35px;top:428px;width:28px;height:1px;background:#b4b4b4"></div>
<div style="left:64px;top:428px;width:2099px;height:1px;background:#d2d2d2"></div>
<div style="left:35px;top:448px;width:28px;height:1px;background:#b4b4b4"></div>
<div style="left:64px;top:448px;width:2099px;height:1px;background:#d2d2d2"></div>
<div style="left:35px;top:468px;width:28px;height:1px;background:#b4b4b4"></div>
<div style="left:64px;top:468px;width:2099px;height:1px;background:#d2d2d2"></div>
<div style="left:35px;top:488px;width:28px;height:1px;background:#b4b4b4"></div>
<div style="left:64px;top:488px;width:2099px;height:1px;background:#d2d2d2"></div>
<div style="left:35px;top:508px;width:28px;height:1px;background:#b4b4b4"></div>
<div style="left:64px;top:508px;width:2099px;height:1px;background:#d2d2d2"></div>
<div style="left:35px;top:528px;width:28px;height:1px;background:#b4b4b4"></div>
<div style="left:64px;top:528px;width:2099px;height:1px;background:#d2d2d2"></div>
<div style="left:35px;top:548px;width:28px;height:1px;background:#b4b4b4"></div>
<div style="left:64px;top:548px;width:2099px;height:1px;background:#d2d2d2"></div>
<div style="left:35px;top:568px;width:28px;height:1px;background:#b4b4b4"></div>
<div style="left:64px;top:568px;width:2099px;height:1px;background:#d2d2d2"></div>
<div style="left:35px;top:588px;width:28px;height:1px;background:#b4b4b4"></div>
<div style="left:64px;top:588px;width:2099px;height:1px;background:#d2d2d2"></div>
<div style="left:35px;top:608px;width:28px;height:1px;background:#b4b4b4"></div>
<div style="left:64px;top:608px;width:2099px;height:1px;background:#d2d2d2"></div>
<div style="left:35px;top:628px;width:28px;height:1px;background:#b4b4b4"></div>
<div style="left:64px;top:628px;width:2099px;height:1px;background:#d2d2d2"></div>
<div style="left:35px;top:648px;width:28px;height:1px;background:#b4b4b4"></div>
<div style="left:64px;top:648px;width:2099px;height:1px;background:#d2d2d2"></div>
<div style="left:35px;top:668px;width:28px;height:1px;background:#b4b4b4"></div>
<div style="left:64px;top:668px;width:2099px;height:1px;background:#d2d2d2"></div>
<div style="left:35px;top:688px;width:28px;height:1px;background:#b4b4b4"></div>
<div style="left:64px;top:688px;width:2099px;height:1px;background:#d2d2d2"></div>
<div style="left:35px;top:708px;width:28px;height:1px;background:#b4b4b4"></div>
<div style="left:64px;top:708px;width:2099px;height:1px;background:#d2d2d2"></div>
<div style="left:35px;top:728px;width:28px;height:1px;background:#b4b4b4"></div>
<div style="left:64px;top:728px;width:2099px;height:1px;background:#d2d2d2"></div>
<div style="left:35px;top:748px;width:28px;height:1px;background:#b4b4b4"></div>
<div style="left:64px;top:748px;width:2099px;height:1px;background:#d2d2d2"></div>
<div style="left:35px;top:768px;width:28px;height:1px;background:#b4b4b4"></div>
<div style="left:64px;top:768px;width:2099px;height:1px;background:#d2d2d2"></div>
<div style="left:35px;top:788px;width:28px;height:1px;background:#b4b4b4"></div>
<div style="left:64px;top:788px;width:2099px;height:1px;background:#d2d2d2"></div>
<div style="left:35px;top:808px;width:28px;height:1px;background:#b4b4b4"></div>
<div style="left:64px;top:808px;width:2099px;height:1px;background:#d2d2d2"></div>
<div style="left:35px;top:828px;width:28px;height:1px;background:#b4b4b4"></div>
<div style="left:64px;top:828px;width:2099px;height:1px;background:#d2d2d2"></div>
<div style="left:35px;top:848px;width:28px;height:1px;background:#b4b4b4"></div>
<div style="left:64px;top:848px;width:2099px;height:1px;background:#d2d2d2"></div>
<div style="left:35px;top:868px;width:28px;height:1px;background:#b4b4b4"></div>
<div style="left:64px;top:868px;width:2099px;height:1px;background:#d2d2d2"></div>
<div style="left:35px;top:888px;width:28px;height:1px;background:#b4b4b4"></div>
<div style="left:64px;top:888px;width:2099px;height:1px;background:#d2d2d2"></div>
<div style="left:35px;top:908px;width:28px;height:1px;background:#b4b4b4"></div>
<div style="left:64px;top:908px;width:2099px;height:1px;background:#d2d2d2"></div>
<div style="left:35px;top:928px;width:28px;height:1px;background:#b4b4b4"></div>
<div style="left:64px;top:928px;width:2099px;height:1px;background:#d2d2d2"></div>
<div style="left:35px;top:948px;width:28px;height:1px;background:#b4b4b4"></div>
<div style="left:64px;top:948px;width:2099px;height:1px;background:#d2d2d2"></div>
<div style="left:35px;top:968px;width:28px;height:1px;background:#b4b4b4"></div>
<div style="left:64px;top:968px;width:2099px;height:1px;background:#d2d2d2"></div>
<div style="left:35px;top:988px;width:28px;height:1px;background:#b4b4b4"></div>
<div style="left:64px;top:988px;width:2099px;height:1px;background:#d2d2d2"></div>
<div style="left:35px;top:1008px;width:28px;height:1px;background:#b4b4b4"></div>
<div style="left:64px;top:1008px;width:2099px;height:1px;background:#d2d2d2"></div>
<div style="left:35px;top:1028px;width:28px;height:1px;background:#b4b4b4"></div>
<div style="left:64px;top:1028px;width:2099px;height:1px;background:#d2d2d2"></div>
<div style="left:35px;top:1048px;width:28px;height:1px;background:#b4b4b4"></div>
<div style="left:64px;top:1048px;width:2099px;height:1px;background:#d2d2d2"></div>
<div style="left:35px;top:1068px;width:28px;height:1px;background:#b4b4b4"></div>
<div style="left:64px;top:1068px;width:2099px;height:1px;background:#d2d2d2"></div>
<div style="left:35px;top:1088px;width:28px;height:1px;background:#b4b4b4"></div>
<div style="left:64px;top:1088px;width:2099px;height:1px;background:#d2d2d2"></div>
<div style="left:35px;top:1108px;width:28px;height:1px;background:#b4b4b4"></div>
<div style="left:64px;top:1108px;width:2099px;height:1px;background:#d2d2d2"></div>
<div style="left:35px;top:1128px;width:28px;height:1px;background:#b4b4b4"></div>
<div style="left:64px;top:1128px;width:2099px;height:1px;background:#d2d2d2"></div>
<div style="left:63px;top:303px;width:1px;height:844px;background:#a8a8a8"></div>
<div style="left:447px;top:283px;width:1px;height:19px;background:#d6d6d6"></div>
<div style="left:447px;top:303px;width:1px;height:844px;background:#d2d2d2"></div>
<div style="left:673px;top:283px;width:1px;height:19px;background:#d6d6d6"></div>
<div style="left:673px;top:303px;width:1px;height:844px;background:#d2d2d2"></div>
<div style="left:718px;top:283px;width:1px;height:19px;background:#d6d6d6"></div>
<div style="left:718px;top:303px;width:1px;height:844px;background:#d2d2d2"></div>
<div style="left:763px;top:283px;width:1px;height:19px;background:#d6d6d6"></div>
<div style="left:763px;top:303px;width:1px;height:844px;background:#d2d2d2"></div>
<div style="left:955px;top:283px;width:1px;height:19px;background:#d6d6d6"></div>
<div style="left:955px;top:303px;width:1px;height:844px;background:#d2d2d2"></div>
<div style="left:1203px;top:283px;width:1px;height:19px;background:#d6d6d6"></div>
<div style="left:1203px;top:303px;width:1px;height:844px;background:#d2d2d2"></div>
<div style="left:1485px;top:283px;width:1px;height:19px;background:#d6d6d6"></div>
<div style="left:1485px;top:303px;width:1px;height:844px;background:#d2d2d2"></div>
<div style="left:1711px;top:283px;width:1px;height:19px;background:#d6d6d6"></div>
<div style="left:1711px;top:303px;width:1px;height:844px;background:#d2d2d2"></div>
<div style="left:1937px;top:283px;width:1px;height:19px;background:#d6d6d6"></div>
<div style="left:1937px;top:303px;width:1px;height:844px;background:#d2d2d2"></div>
<div style="left:2163px;top:283px;width:1px;height:19px;background:#d6d6d6"></div>
<div style="left:2163px;top:303px;width:1px;height:844px;background:#d2d2d2"></div>
<div class="tb" style="left:242px;top:287px;"><i><b style="margin-left:-0.84px;margin-right:-0.84px;transform:scaleX(0.738)">N</b></i><i>a</i><i><b style="margin-left:-1.50px;margin-right:-1.50px;transform:scaleX(0.640)">m</b></i><i>e</i></div>
<div class="tb" style="left:558px;top:287px;"><i>#</i></div>
<div class="tb" style="left:690px;top:287px;"><i><b style="margin-left:-1.16px;margin-right:-1.16px;transform:scaleX(0.686)">O</b></i><i><b style="margin-left:0.16px;margin-right:0.16px;transform:scaleX(0.959)">S</b></i></div>
<div class="tb" style="left:724px;top:287px;"><i><b style="margin-left:0.16px;margin-right:0.16px;transform:scaleX(0.959)">S</b></i><i>t</i><i>a</i><i>t</i><i>e</i></div>
<div class="tb" style="left:850px;top:287px;"><i><b style="margin-left:-0.84px;margin-right:-0.84px;transform:scaleX(0.738)">R</b></i><i><b style="margin-left:0.16px;margin-right:0.16px;transform:scaleX(0.959)">u</b></i><i><b style="margin-left:0.16px;margin-right:0.16px;transform:scaleX(0.959)">n</b></i></div>
<div class="tb" style="left:1066px;top:287px;"><i><b style="margin-left:-0.50px;margin-right:-0.50px;transform:scaleX(0.800)">T</b></i><i>i</i><i><b style="margin-left:-1.50px;margin-right:-1.50px;transform:scaleX(0.640)">m</b></i><i>e</i></div>
<div class="tb" style="left:1342px;top:287px;"><i><b style="margin-left:-2.50px;margin-right:-2.50px;transform:scaleX(0.533)">%</b></i></div>
<div class="tb" style="left:1557px;top:287px;"><i><b style="margin-left:0.16px;margin-right:0.16px;transform:scaleX(0.959)">S</b></i><i>e</i><i>r</i><i>v</i><i>e</i><i>r</i><i> </i><i>e</i><i>r</i><i>r</i><i>o</i><i>r</i></div>
<div class="tb" style="left:1790px;top:287px;"><i><b style="margin-left:-0.84px;margin-right:-0.84px;transform:scaleX(0.738)">D</b></i><i>a</i><i>t</i><i>a</i><i> </i><i>e</i><i>r</i><i>r</i><i>o</i><i>r</i></div>
<div class="tb" style="left:2012px;top:287px;"><i><b style="margin-left:0.16px;margin-right:0.16px;transform:scaleX(0.959)">S</b></i><i>e</i><i>r</i><i>v</i><i>e</i><i>r</i><i> </i><i><b style="margin-left:-0.16px;margin-right:-0.16px;transform:scaleX(0.873)">P</b></i><i>o</i><i>r</i><i>t</i></div>
<div class="tn" style="left:40px;top:314px;-webkit-text-stroke:0.15px #000"><i><b style="margin-left:-0.00px;margin-right:-0.00px;transform:scaleX(0.933)">1</b></i></div>
<div class="tn" style="left:40px;top:347px;-webkit-text-stroke:0.15px #000"><i><b style="margin-left:-0.00px;margin-right:-0.00px;transform:scaleX(0.933)">2</b></i></div>
<div class="tn" style="left:40px;top:373px;-webkit-text-stroke:0.15px #000"><i><b style="margin-left:-0.00px;margin-right:-0.00px;transform:scaleX(0.933)">3</b></i></div>
<div class="tn" style="left:40px;top:393px;-webkit-text-stroke:0.15px #000"><i><b style="margin-left:-0.00px;margin-right:-0.00px;transform:scaleX(0.933)">4</b></i></div>
<div class="tn" style="left:40px;top:413px;-webkit-text-stroke:0.15px #000"><i><b style="margin-left:-0.00px;margin-right:-0.00px;transform:scaleX(0.933)">5</b></i></div>
<div class="tn" style="left:40px;top:433px;-webkit-text-stroke:0.15px #000"><i><b style="margin-left:-0.00px;margin-right:-0.00px;transform:scaleX(0.933)">6</b></i></div>
<div class="tn" style="left:40px;top:453px;-webkit-text-stroke:0.15px #000"><i><b style="margin-left:-0.00px;margin-right:-0.00px;transform:scaleX(0.933)">7</b></i></div>
<div class="tn" style="left:40px;top:473px;-webkit-text-stroke:0.15px #000"><i><b style="margin-left:-0.00px;margin-right:-0.00px;transform:scaleX(0.933)">8</b></i></div>
<div class="tn" style="left:40px;top:493px;-webkit-text-stroke:0.15px #000"><i><b style="margin-left:-0.00px;margin-right:-0.00px;transform:scaleX(0.933)">9</b></i></div>
<div class="tb" style="left:40px;top:513px;"><i>1</i><i>0</i></div>
<div class="tn" style="left:40px;top:533px;-webkit-text-stroke:0.15px #000"><i><b style="margin-left:-0.00px;margin-right:-0.00px;transform:scaleX(0.933)">1</b></i><i><b style="margin-left:-0.00px;margin-right:-0.00px;transform:scaleX(0.933)">1</b></i></div>
<div class="tn" style="left:40px;top:553px;-webkit-text-stroke:0.15px #000"><i><b style="margin-left:-0.00px;margin-right:-0.00px;transform:scaleX(0.933)">1</b></i><i><b style="margin-left:-0.00px;margin-right:-0.00px;transform:scaleX(0.933)">2</b></i></div>
<div class="tn" style="left:40px;top:573px;-webkit-text-stroke:0.15px #000"><i><b style="margin-left:-0.00px;margin-right:-0.00px;transform:scaleX(0.933)">1</b></i><i><b style="margin-left:-0.00px;margin-right:-0.00px;transform:scaleX(0.933)">3</b></i></div>
<div class="tn" style="left:40px;top:593px;-webkit-text-stroke:0.15px #000"><i><b style="margin-left:-0.00px;margin-right:-0.00px;transform:scaleX(0.933)">1</b></i><i><b style="margin-left:-0.00px;margin-right:-0.00px;transform:scaleX(0.933)">4</b></i></div>
<div class="tn" style="left:40px;top:613px;-webkit-text-stroke:0.15px #000"><i><b style="margin-left:-0.00px;margin-right:-0.00px;transform:scaleX(0.933)">1</b></i><i><b style="margin-left:-0.00px;margin-right:-0.00px;transform:scaleX(0.933)">5</b></i></div>
<div class="tn" style="left:40px;top:633px;-webkit-text-stroke:0.15px #000"><i><b style="margin-left:-0.00px;margin-right:-0.00px;transform:scaleX(0.933)">1</b></i><i><b style="margin-left:-0.00px;margin-right:-0.00px;transform:scaleX(0.933)">6</b></i></div>
<div class="tn" style="left:40px;top:653px;-webkit-text-stroke:0.15px #000"><i><b style="margin-left:-0.00px;margin-right:-0.00px;transform:scaleX(0.933)">1</b></i><i><b style="margin-left:-0.00px;margin-right:-0.00px;transform:scaleX(0.933)">7</b></i></div>
<div class="tn" style="left:40px;top:673px;-webkit-text-stroke:0.15px #000"><i><b style="margin-left:-0.00px;margin-right:-0.00px;transform:scaleX(0.933)">1</b></i><i><b style="margin-left:-0.00px;margin-right:-0.00px;transform:scaleX(0.933)">8</b></i></div>
<div class="tn" style="left:40px;top:693px;-webkit-text-stroke:0.15px #000"><i><b style="margin-left:-0.00px;margin-right:-0.00px;transform:scaleX(0.933)">1</b></i><i><b style="margin-left:-0.00px;margin-right:-0.00px;transform:scaleX(0.933)">9</b></i></div>
<div class="tn" style="left:40px;top:713px;-webkit-text-stroke:0.15px #000"><i><b style="margin-left:-0.00px;margin-right:-0.00px;transform:scaleX(0.933)">2</b></i><i><b style="margin-left:-0.00px;margin-right:-0.00px;transform:scaleX(0.933)">0</b></i></div>
<div class="tn" style="left:40px;top:733px;-webkit-text-stroke:0.15px #000"><i><b style="margin-left:-0.00px;margin-right:-0.00px;transform:scaleX(0.933)">2</b></i><i><b style="margin-left:-0.00px;margin-right:-0.00px;transform:scaleX(0.933)">1</b></i></div>
<div class="tn" style="left:40px;top:753px;-webkit-text-stroke:0.15px #000"><i><b style="margin-left:-0.00px;margin-right:-0.00px;transform:scaleX(0.933)">2</b></i><i><b style="margin-left:-0.00px;margin-right:-0.00px;transform:scaleX(0.933)">2</b></i></div>
<div class="tn" style="left:40px;top:773px;-webkit-text-stroke:0.15px #000"><i><b style="margin-left:-0.00px;margin-right:-0.00px;transform:scaleX(0.933)">2</b></i><i><b style="margin-left:-0.00px;margin-right:-0.00px;transform:scaleX(0.933)">3</b></i></div>
<div class="tn" style="left:40px;top:793px;-webkit-text-stroke:0.15px #000"><i><b style="margin-left:-0.00px;margin-right:-0.00px;transform:scaleX(0.933)">2</b></i><i><b style="margin-left:-0.00px;margin-right:-0.00px;transform:scaleX(0.933)">4</b></i></div>
<div class="tn" style="left:40px;top:813px;-webkit-text-stroke:0.15px #000"><i><b style="margin-left:-0.00px;margin-right:-0.00px;transform:scaleX(0.933)">2</b></i><i><b style="margin-left:-0.00px;margin-right:-0.00px;transform:scaleX(0.933)">5</b></i></div>
<div class="tn" style="left:40px;top:833px;-webkit-text-stroke:0.15px #000"><i><b style="margin-left:-0.00px;margin-right:-0.00px;transform:scaleX(0.933)">2</b></i><i><b style="margin-left:-0.00px;margin-right:-0.00px;transform:scaleX(0.933)">6</b></i></div>
<div class="tn" style="left:40px;top:853px;-webkit-text-stroke:0.15px #000"><i><b style="margin-left:-0.00px;margin-right:-0.00px;transform:scaleX(0.933)">2</b></i><i><b style="margin-left:-0.00px;margin-right:-0.00px;transform:scaleX(0.933)">7</b></i></div>
<div class="tn" style="left:40px;top:873px;-webkit-text-stroke:0.15px #000"><i><b style="margin-left:-0.00px;margin-right:-0.00px;transform:scaleX(0.933)">2</b></i><i><b style="margin-left:-0.00px;margin-right:-0.00px;transform:scaleX(0.933)">8</b></i></div>
<div class="tn" style="left:40px;top:893px;-webkit-text-stroke:0.15px #000"><i><b style="margin-left:-0.00px;margin-right:-0.00px;transform:scaleX(0.933)">2</b></i><i><b style="margin-left:-0.00px;margin-right:-0.00px;transform:scaleX(0.933)">9</b></i></div>
<div class="tn" style="left:40px;top:913px;-webkit-text-stroke:0.15px #000"><i><b style="margin-left:-0.00px;margin-right:-0.00px;transform:scaleX(0.933)">3</b></i><i><b style="margin-left:-0.00px;margin-right:-0.00px;transform:scaleX(0.933)">0</b></i></div>
<div class="tn" style="left:40px;top:933px;-webkit-text-stroke:0.15px #000"><i><b style="margin-left:-0.00px;margin-right:-0.00px;transform:scaleX(0.933)">3</b></i><i><b style="margin-left:-0.00px;margin-right:-0.00px;transform:scaleX(0.933)">1</b></i></div>
<div class="tn" style="left:40px;top:953px;-webkit-text-stroke:0.15px #000"><i><b style="margin-left:-0.00px;margin-right:-0.00px;transform:scaleX(0.933)">3</b></i><i><b style="margin-left:-0.00px;margin-right:-0.00px;transform:scaleX(0.933)">2</b></i></div>
<div class="tn" style="left:40px;top:973px;-webkit-text-stroke:0.15px #000"><i><b style="margin-left:-0.00px;margin-right:-0.00px;transform:scaleX(0.933)">3</b></i><i><b style="margin-left:-0.00px;margin-right:-0.00px;transform:scaleX(0.933)">3</b></i></div>
<div class="tn" style="left:40px;top:993px;-webkit-text-stroke:0.15px #000"><i><b style="margin-left:-0.00px;margin-right:-0.00px;transform:scaleX(0.933)">3</b></i><i><b style="margin-left:-0.00px;margin-right:-0.00px;transform:scaleX(0.933)">4</b></i></div>
<div class="tn" style="left:40px;top:1013px;-webkit-text-stroke:0.15px #000"><i><b style="margin-left:-0.00px;margin-right:-0.00px;transform:scaleX(0.933)">3</b></i><i><b style="margin-left:-0.00px;margin-right:-0.00px;transform:scaleX(0.933)">5</b></i></div>
<div class="tn" style="left:40px;top:1033px;-webkit-text-stroke:0.15px #000"><i><b style="margin-left:-0.00px;margin-right:-0.00px;transform:scaleX(0.933)">3</b></i><i><b style="margin-left:-0.00px;margin-right:-0.00px;transform:scaleX(0.933)">6</b></i></div>
<div class="tn" style="left:40px;top:1053px;-webkit-text-stroke:0.15px #000"><i><b style="margin-left:-0.00px;margin-right:-0.00px;transform:scaleX(0.933)">3</b></i><i><b style="margin-left:-0.00px;margin-right:-0.00px;transform:scaleX(0.933)">7</b></i></div>
<div class="tn" style="left:40px;top:1073px;-webkit-text-stroke:0.15px #000"><i><b style="margin-left:-0.00px;margin-right:-0.00px;transform:scaleX(0.933)">3</b></i><i><b style="margin-left:-0.00px;margin-right:-0.00px;transform:scaleX(0.933)">8</b></i></div>
<div class="tn" style="left:40px;top:1093px;-webkit-text-stroke:0.15px #000"><i><b style="margin-left:-0.00px;margin-right:-0.00px;transform:scaleX(0.933)">3</b></i><i><b style="margin-left:-0.00px;margin-right:-0.00px;transform:scaleX(0.933)">9</b></i></div>
<div class="tn" style="left:40px;top:1113px;-webkit-text-stroke:0.15px #000"><i><b style="margin-left:-0.00px;margin-right:-0.00px;transform:scaleX(0.933)">4</b></i><i><b style="margin-left:-0.00px;margin-right:-0.00px;transform:scaleX(0.933)">0</b></i></div>
<div class="tn" style="left:40px;top:1133px;-webkit-text-stroke:0.15px #000"><i><b style="margin-left:-0.00px;margin-right:-0.00px;transform:scaleX(0.933)">4</b></i><i><b style="margin-left:-0.00px;margin-right:-0.00px;transform:scaleX(0.933)">1</b></i></div>
<div class="chk" style="left:67px;top:305px;width:28px;height:28px;"></div>
<div class="tn" style="left:256px;top:313px;"><i><b style="margin-left:-0.66px;margin-right:-0.66px;transform:scaleX(0.764)">L</b></i><i><b style="margin-left:-0.00px;margin-right:-0.00px;transform:scaleX(0.933)">o</b></i><i>c</i><i>a</i><i>l</i></div>
<div class="tn" style="left:539px;top:313px;"><i><b style="margin-left:-0.00px;margin-right:-0.00px;transform:scaleX(0.933)">1</b></i><i> </i><i>-</i><i><b style="margin-left:-0.38px;margin-right:-0.38px;transform:scaleX(0.828)">&gt;</b></i><i> </i><i><b style="margin-left:-0.00px;margin-right:-0.00px;transform:scaleX(0.933)">1</b></i><i><b style="margin-left:-0.00px;margin-right:-0.00px;transform:scaleX(0.933)">4</b></i></div>
<svg style="position:absolute;left:678px;top:303px" width="30" height="31" viewBox="0 0 30 31"><defs><linearGradient id="wo" x1="0" x2="1"><stop offset="0" stop-color="#f0701a"/><stop offset="0.4" stop-color="#ffa050"/><stop offset="1" stop-color="#e04a00"/></linearGradient><linearGradient id="wg" x1="0" x2="1"><stop offset="0" stop-color="#4a9010"/><stop offset="0.6" stop-color="#90d830"/><stop offset="1" stop-color="#60b018"/></linearGradient><linearGradient id="wb" x1="0" x2="1"><stop offset="0" stop-color="#4070f0"/><stop offset="0.4" stop-color="#80a8ff"/><stop offset="1" stop-color="#2040d8"/></linearGradient><linearGradient id="wy" x1="0" x2="1"><stop offset="0" stop-color="#c89000"/><stop offset="0.6" stop-color="#ffd020"/><stop offset="1" stop-color="#e0a800"/></linearGradient></defs><path d="M6.5 2 C9.5 0 13.5 0 17.3 2.5 L14.3 14.2 C11 12.3 7 12 3.6 13.7 Z" fill="url(#wo)"/><path d="M17.8 4 C21 6 25.5 6 30 3.8 L27 16.5 C23 18.5 19 18 15.2 16 Z" fill="url(#wg)"/><path d="M3.2 15.6 C6.5 13.8 10.5 14 14 16 L11.6 27 C8.5 25 4 25 0.4 27.5 Z" fill="url(#wb)"/><path d="M15 17.8 C18.5 19.8 22.5 20 26.6 18 L24.2 29.5 C20.5 31 16.5 30.8 12.5 28.8 Z" fill="url(#wy)"/></svg>
<div class="chk" style="left:67px;top:338px;width:28px;height:28px;"></div>
<svg style="position:absolute;left:67px;top:338px" width="28" height="28" viewBox="0 0 28 28"><path d="M6.8 13.4 L12.2 20.2 L22.2 4.8" fill="none" stroke="#000" stroke-width="4.4" stroke-linecap="butt" stroke-linejoin="miter" stroke-miterlimit="3"/></svg>
<div class="tn" style="left:241px;top:346px;"><i><b style="margin-left:-1.34px;margin-right:-1.34px;transform:scaleX(0.646)">w</b></i><i>a</i><i><b style="margin-left:-0.00px;margin-right:-0.00px;transform:scaleX(0.933)">n</b></i><i><b style="margin-left:-0.00px;margin-right:-0.00px;transform:scaleX(0.933)">g</b></i><i><b style="margin-left:-0.00px;margin-right:-0.00px;transform:scaleX(0.933)">k</b></i><i>e</i><i><b style="margin-left:-0.00px;margin-right:-0.00px;transform:scaleX(0.933)">d</b></i><i><b style="margin-left:-0.00px;margin-right:-0.00px;transform:scaleX(0.933)">o</b></i><i><b style="margin-left:-0.00px;margin-right:-0.00px;transform:scaleX(0.933)">n</b></i><i><b style="margin-left:-0.00px;margin-right:-0.00px;transform:scaleX(0.933)">g</b></i></div>
<div class="tn" style="left:536px;top:346px;"><i><b style="margin-left:-0.00px;margin-right:-0.00px;transform:scaleX(0.933)">1</b></i><i><b style="margin-left:-0.00px;margin-right:-0.00px;transform:scaleX(0.933)">5</b></i><i> </i><i>-</i><i><b style="margin-left:-0.38px;margin-right:-0.38px;transform:scaleX(0.828)">&gt;</b></i><i> </i><i><b style="margin-left:-0.00px;margin-right:-0.00px;transform:scaleX(0.933)">7</b></i><i><b style="margin-left:-0.00px;margin-right:-0.00px;transform:scaleX(0.933)">0</b></i></div>
<svg style="position:absolute;left:678px;top:337px" width="30" height="30" viewBox="0 0 30 30"><path d="M10 9 C9 3 11 0 15.3 0 C19.5 0 21.5 3 21 9.5 C23 12 26.5 16 26.5 21 L26 28 L5 28 L4 22 C4 17 8 13 10 9Z" fill="#000"/><path d="M10.5 11 C13 10 17.5 10 19.8 11.5 C22 15 23 20 22 25 C20 28 11 28.5 8 25.5 C6 21 7.5 15 10.5 11Z" fill="#fff"/><path d="M11.5 4.6 L13 3.8 L13.6 5.6Z M17.2 5.6 L17.8 3.8 L19.3 4.8Z" fill="#fff"/><path d="M10.8 7.6 C13 6.2 16 6 17.8 7.4 C16.5 9.6 14 11 13.4 10.8 C12.5 10 11.5 9 10.8 7.6Z" fill="#f2b418"/><path d="M0.5 28.5 C0 25 1 22 4 21 C6 20.5 9 22.5 11.3 26.5 C11 28.5 9 29.8 6 29.5 C3.5 29.3 1.5 29 0.5 28.5Z" fill="#f2b418"/><path d="M20 22 C22 20.5 25 21 26 23 C27.5 24.5 29.5 25.5 30 26.5 C28 28.5 25 29.8 22 29.8 C20.5 29 19.8 25 20 22Z" fill="#f2b418"/><path d="M10 28.6 L21 28.6 L20.5 29.8 L10.5 29.8Z" fill="#111"/></svg>
<svg style="position:absolute;left:724px;top:336px" width="30" height="31" viewBox="0 0 30 31"><circle cx="14.6" cy="15.4" r="13.6" fill="#00ff00" stroke="#000" stroke-width="2.4"/><ellipse cx="11.1" cy="10.6" rx="1.7" ry="3" fill="#000"/><ellipse cx="18.7" cy="10.6" rx="1.7" ry="3" fill="#000"/><path d="M6.5 18.6 C10 23.4 19 23.4 23 18.6" fill="none" stroke="#000" stroke-width="2.4"/></svg>
<div style="left:1204px;top:336px;width:281px;height:32px;border:1px solid #a8a8a8;border-radius:2px;background:#fff"></div>
<div class="td" style="left:1204px;width:281px;text-align:center;top:348px;">0%</div>
<div class="td" style="left:1486px;width:225px;text-align:center;top:348px;">0</div>
<div class="td" style="left:1712px;width:225px;text-align:center;top:348px;">0</div>
<div class="td" style="left:1938px;width:225px;text-align:center;top:348px;">9090</div>
<div style="left:2476px;top:282px;width:29px;height:866px;border:1px solid #a8a8a8;background:#e6e6e6"></div>
<div style="left:2476px;top:282px;width:29px;height:29px;border:1px solid #a8a8a8;background:linear-gradient(90deg,#f8f8f8,#f0f0f0)"></div>
<svg style="position:absolute;left:2486px;top:292px" width="9" height="6" viewBox="0 0 9 6"><path d="M0 5 L4.5 0 L9 5Z" fill="#444"/></svg>
<div style="left:2476px;top:310px;width:29px;height:115px;border:1px solid #a8a8a8;background:linear-gradient(90deg,#fdfdfd,#f2f2f2)"></div>
<div style="left:2476px;top:1119px;width:29px;height:29px;border:1px solid #a8a8a8;background:linear-gradient(90deg,#f8f8f8,#f0f0f0)"></div>
<svg style="position:absolute;left:2486px;top:1130px" width="9" height="6" viewBox="0 0 9 6"><path d="M0 0 L9 0 L4.5 5Z" fill="#444"/></svg>
<div style="left:34px;top:1160px;width:2471px;height:88px;border:1px solid #adadad"></div>
<div class="t" style="left:39px;top:1179px;"><i><b style="margin-left:-0.66px;margin-right:-0.66px;transform:scaleX(0.764)">T</b></i><i>i</i><i><b style="margin-left:-1.66px;margin-right:-1.66px;transform:scaleX(0.600)">m</b></i><i>e</i><i> </i><i>e</i><i>f</i><i>f</i><i>i</i><i>c</i><i>i</i><i>e</i><i><b style="margin-left:-0.00px;margin-right:-0.00px;transform:scaleX(0.933)">n</b></i><i>c</i><i><b style="margin-left:-0.00px;margin-right:-0.00px;transform:scaleX(0.933)">y</b></i><i> </i><i>(</i><i>c</i><i><b style="margin-left:-0.00px;margin-right:-0.00px;transform:scaleX(0.933)">o</b></i><i><b style="margin-left:-1.66px;margin-right:-1.66px;transform:scaleX(0.600)">m</b></i><i><b style="margin-left:-0.00px;margin-right:-0.00px;transform:scaleX(0.933)">p</b></i><i><b style="margin-left:-0.00px;margin-right:-0.00px;transform:scaleX(0.933)">u</b></i><i>t</i><i>a</i><i>t</i><i>i</i><i><b style="margin-left:-0.00px;margin-right:-0.00px;transform:scaleX(0.933)">o</b></i><i><b style="margin-left:-0.00px;margin-right:-0.00px;transform:scaleX(0.933)">n</b></i><i> </i><i><b style="margin-left:-0.00px;margin-right:-0.00px;transform:scaleX(0.933)">v</b></i><i>s</i><i>.</i><i> </i><i>c</i><i><b style="margin-left:-0.00px;margin-right:-0.00px;transform:scaleX(0.933)">o</b></i><i><b style="margin-left:-1.66px;margin-right:-1.66px;transform:scaleX(0.600)">m</b></i><i><b style="margin-left:-1.66px;margin-right:-1.66px;transform:scaleX(0.600)">m</b></i><i><b style="margin-left:-0.00px;margin-right:-0.00px;transform:scaleX(0.933)">u</b></i><i><b style="margin-left:-0.00px;margin-right:-0.00px;transform:scaleX(0.933)">n</b></i><i>i</i><i>c</i><i>a</i><i>t</i><i>i</i><i><b style="margin-left:-0.00px;margin-right:-0.00px;transform:scaleX(0.933)">o</b></i><i><b style="margin-left:-0.00px;margin-right:-0.00px;transform:scaleX(0.933)">n</b></i><i>)</i></div>
<div class="inp" style="left:39px;top:1195px;width:457px;height:19px;"></div>
<div style="left:40px;top:1217px;width:456px;height:26px;border-top:2px solid #8a8a8a;border-left:2px solid #8a8a8a;border-bottom:1px solid #fff;border-right:1px solid #fff;background:#ececec"></div>
<div class="t" style="left:44px;top:1224px;"><i><b style="margin-left:-1.34px;margin-right:-1.34px;transform:scaleX(0.646)">A</b></i><i>c</i><i>t</i><i>i</i><i><b style="margin-left:-0.00px;margin-right:-0.00px;transform:scaleX(0.933)">v</b></i><i>e</i><i> </i><i><b style="margin-left:-1.00px;margin-right:-1.00px;transform:scaleX(0.700)">C</b></i><i><b style="margin-left:-0.00px;margin-right:-0.00px;transform:scaleX(0.933)">o</b></i><i><b style="margin-left:-1.66px;margin-right:-1.66px;transform:scaleX(0.600)">m</b></i><i><b style="margin-left:-0.00px;margin-right:-0.00px;transform:scaleX(0.933)">p</b></i><i><b style="margin-left:-0.00px;margin-right:-0.00px;transform:scaleX(0.933)">u</b></i><i>t</i><i>e</i><i>r</i><i>s</i><i> </i><i>:</i><i> </i><i><b style="margin-left:-0.00px;margin-right:-0.00px;transform:scaleX(0.933)">0</b></i><i>/</i><i><b style="margin-left:-0.00px;margin-right:-0.00px;transform:scaleX(0.933)">1</b></i></div>
<div class="t" style="left:218px;top:1224px;"><i><b style="margin-left:-1.34px;margin-right:-1.34px;transform:scaleX(0.646)">A</b></i><i>c</i><i>t</i><i>i</i><i><b style="margin-left:-0.00px;margin-right:-0.00px;transform:scaleX(0.933)">v</b></i><i>e</i><i> </i><i><b style="margin-left:-1.00px;margin-right:-1.00px;transform:scaleX(0.700)">C</b></i><i><b style="margin-left:-0.00px;margin-right:-0.00px;transform:scaleX(0.933)">o</b></i><i>r</i><i>e</i><i>s</i><i> </i><i>:</i><i> </i><i><b style="margin-left:-0.00px;margin-right:-0.00px;transform:scaleX(0.933)">0</b></i><i>/</i><i><b style="margin-left:-0.00px;margin-right:-0.00px;transform:scaleX(0.933)">5</b></i><i><b style="margin-left:-0.00px;margin-right:-0.00px;transform:scaleX(0.933)">6</b></i></div>
<div class="btn" style="left:957px;top:1166px;width:80px;height:36px;"></div>
<svg style="position:absolute;left:968px;top:1172px" width="20" height="23" viewBox="0 0 20 23"><path d="M4 2 C6 0 8 1 9 3 L11 8 L17 3 C19 2 21 4 19 6 L13 12 L16 19 C17 22 14 23 13 21 L10 15 L3 21 C1 22 0 20 1 18 L8 11 L4 4Z" fill="#bf4f5d" stroke="#2a1216" stroke-width="1"/></svg>
<div class="t" style="left:991px;top:1178px;"><i><b style="margin-left:-1.00px;margin-right:-1.00px;transform:scaleX(0.700)">C</b></i><i>a</i><i><b style="margin-left:-0.00px;margin-right:-0.00px;transform:scaleX(0.933)">n</b></i><i>c</i><i>e</i><i>l</i></div>
<div class="btn" style="left:957px;top:1205px;width:80px;height:36px;"></div>
<svg style="position:absolute;left:978px;top:1210px" width="24" height="24" viewBox="0 0 24 24"><path d="M1 13 L5 10 L10 17 L19 1 L23 0 L11 22 L8 22 Z" fill="#6e9a5a" stroke="#4a6a3a" stroke-width="0.8"/></svg>
<div class="t" style="left:1002px;top:1217px;"><i><b style="margin-left:-1.34px;margin-right:-1.34px;transform:scaleX(0.646)">O</b></i><i><b style="margin-left:-0.00px;margin-right:-0.00px;transform:scaleX(0.933)">k</b></i></div>
<div class="btn" style="left:1497px;top:1165px;width:126px;height:37px;"></div>
<svg style="position:absolute;left:1507px;top:1172px" width="20" height="23" viewBox="0 0 20 23"><path d="M1 2 L18 1 L19 20 L2 22 Z" fill="#2b6fd0" stroke="#2a3a70" stroke-width="1"/><rect x="4.5" y="2" width="11" height="8" fill="#e8e8e8"/><rect x="5" y="3.5" width="10" height="1" fill="#bbb"/><rect x="5" y="6" width="10" height="1" fill="#bbb"/><rect x="4.5" y="13" width="11" height="7" fill="#d0d0d0"/><rect x="6" y="14" width="2.5" height="4" fill="#555"/></svg>
<div class="t" style="left:1530px;top:1171px;"><i><b style="margin-left:-0.34px;margin-right:-0.34px;transform:scaleX(0.839)">S</b></i><i>a</i><i><b style="margin-left:-0.00px;margin-right:-0.00px;transform:scaleX(0.933)">v</b></i><i>e</i></div>
<div class="t" style="left:1530px;top:1185px;"><i><b style="margin-left:-1.00px;margin-right:-1.00px;transform:scaleX(0.700)">C</b></i><i><b style="margin-left:-0.00px;margin-right:-0.00px;transform:scaleX(0.933)">o</b></i><i><b style="margin-left:-1.66px;margin-right:-1.66px;transform:scaleX(0.600)">m</b></i><i><b style="margin-left:-0.00px;margin-right:-0.00px;transform:scaleX(0.933)">p</b></i><i><b style="margin-left:-0.00px;margin-right:-0.00px;transform:scaleX(0.933)">u</b></i><i>t</i><i>e</i><i>r</i><i>s</i><i> </i><i>l</i><i>i</i><i>s</i><i>t</i></div>
<div class="btn" style="left:1497px;top:1205px;width:126px;height:37px;"></div>
<svg style="position:absolute;left:1505px;top:1212px" width="24" height="24" viewBox="0 0 24 24"><path d="M1 8 C1 6 3 5 6 4 L14 1 C16 0 17 1 18 2 L20 5 L3 22 C1 23 1 22 1 20 Z" fill="#e8b848" stroke="#9a7420" stroke-width="0.8"/><path d="M5 11 L18 4 L19 10 L4 20 Z" fill="#f4f4f4" stroke="#999" stroke-width="0.5"/><path d="M3 22 C2 20 4 17 8 15 L22 7 C24 7 24 9 23 11 L19 17 C18 19 15 20 12 21 Z" fill="#f0c85a" stroke="#9a7420" stroke-width="0.8"/></svg>
<div class="t" style="left:1530px;top:1211px;"><i><b style="margin-left:-0.66px;margin-right:-0.66px;transform:scaleX(0.764)">L</b></i><i><b style="margin-left:-0.00px;margin-right:-0.00px;transform:scaleX(0.933)">o</b></i><i>a</i><i><b style="margin-left:-0.00px;margin-right:-0.00px;transform:scaleX(0.933)">d</b></i></div>
<div class="t" style="left:1530px;top:1225px;"><i><b style="margin-left:-1.00px;margin-right:-1.00px;transform:scaleX(0.700)">C</b></i><i><b style="margin-left:-0.00px;margin-right:-0.00px;transform:scaleX(0.933)">o</b></i><i><b style="margin-left:-1.66px;margin-right:-1.66px;transform:scaleX(0.600)">m</b></i><i><b style="margin-left:-0.00px;margin-right:-0.00px;transform:scaleX(0.933)">p</b></i><i><b style="margin-left:-0.00px;margin-right:-0.00px;transform:scaleX(0.933)">u</b></i><i>t</i><i>e</i><i>r</i><i>s</i><i> </i><i>l</i><i>i</i><i>s</i><i>t</i></div>
<div class="btn" style="left:2084px;top:1186px;width:126px;height:36px;"></div>
<svg style="position:absolute;left:2093px;top:1192px" width="23" height="23" viewBox="0 0 23 23"><path d="M5 22 L16 22 L18 20 L8 19 Z" fill="#9a9a9a"/><path d="M12.7 6 L20.5 4.2 M12 9.5 C17 8.5 20.5 10.5 19.5 13.5" fill="none" stroke="#111" stroke-width="1"/><path d="M4.2 5.2 L9 7.5 L9 13 L4.2 11 Z" fill="#505060" stroke="#111" stroke-width="0.6"/><path d="M5 7 L8.3 8.6 L8.3 10 L5 8.5Z" fill="#3050e0"/><path d="M4.2 5.2 L9 0.7 L12.7 3 L9 7.5 Z" fill="#2238f0"/><path d="M9 7.5 L12.7 3 L12.7 9 L9 13 Z" fill="#00008e"/><path d="M11.2 14 L15.5 16.5 L15.5 22.4 L11.2 20 Z" fill="#484858" stroke="#111" stroke-width="0.6"/><path d="M12 16 L15 17.6 L15 19 L12 17.5Z" fill="#3050e0"/><path d="M11.2 14 L15 10 L19.4 12.5 L15.5 16.5 Z" fill="#2238f0"/><path d="M15.5 16.5 L19.4 12.5 L19.4 18.5 L15.5 22.4 Z" fill="#00008e"/><path d="M1 15 L3.8 20 L10.2 8.3" fill="none" stroke="#300" stroke-width="3.6"/><path d="M1 15 L3.8 20 L10.2 8.3" fill="none" stroke="#e80010" stroke-width="2.2"/></svg>
<div class="t" style="left:2117px;top:1198px;"><i><b style="margin-left:-0.66px;margin-right:-0.66px;transform:scaleX(0.764)">T</b></i><i>e</i><i>s</i><i>t</i><i> </i><i>c</i><i><b style="margin-left:-0.00px;margin-right:-0.00px;transform:scaleX(0.933)">o</b></i><i><b style="margin-left:-1.66px;margin-right:-1.66px;transform:scaleX(0.600)">m</b></i><i><b style="margin-left:-0.00px;margin-right:-0.00px;transform:scaleX(0.933)">p</b></i><i><b style="margin-left:-0.00px;margin-right:-0.00px;transform:scaleX(0.933)">u</b></i><i>t</i><i>e</i><i>r</i><i>s</i></div>
<div class="btn" style="left:2214px;top:1186px;width:138px;height:36px;"></div>
<svg style="position:absolute;left:2225px;top:1191px" width="19" height="25" viewBox="0 0 19 25"><path d="M7 1 L14 0 L18 3 L18 17 L10 19 Z" fill="#dde8f8" stroke="#6a8ac0" stroke-width="0.8"/><path d="M1 5 L10 3 L13 7 L13 22 L2 24 Z" fill="#f4f4f4" stroke="#777" stroke-width="0.9"/></svg>
<div class="t" style="left:2247px;top:1198px;"><i><b style="margin-left:-1.00px;margin-right:-1.00px;transform:scaleX(0.700)">C</b></i><i><b style="margin-left:-0.00px;margin-right:-0.00px;transform:scaleX(0.933)">o</b></i><i><b style="margin-left:-0.00px;margin-right:-0.00px;transform:scaleX(0.933)">p</b></i><i><b style="margin-left:-0.00px;margin-right:-0.00px;transform:scaleX(0.933)">y</b></i><i> </i><i>s</i><i>e</i><i>t</i><i> </i><i><b style="margin-left:-0.00px;margin-right:-0.00px;transform:scaleX(0.933)">o</b></i><i>f</i><i> </i><i><b style="margin-left:-0.00px;margin-right:-0.00px;transform:scaleX(0.933)">d</b></i><i>a</i><i>t</i><i>a</i></div>
<div class="btn" style="left:2356px;top:1186px;width:144px;height:36px;"></div>
<svg style="position:absolute;left:2368px;top:1194px" width="16" height="20" viewBox="0 0 16 20"><defs><linearGradient id="sg" x1="0" y1="0" x2="0.3" y2="1"><stop offset="0" stop-color="#ffa000"/><stop offset="1" stop-color="#fff040"/></linearGradient></defs><path d="M1.2 9.4 L9.9 1.2 L9.9 6.6 L14.4 6.6 L14.4 13.3 L9.9 13.3 L9.9 18 Z" fill="url(#sg)" stroke="#a07820" stroke-width="1" stroke-linejoin="round"/></svg>
<div class="t" style="left:2388px;top:1198px;"><i><b style="margin-left:-0.34px;margin-right:-0.34px;transform:scaleX(0.839)">S</b></i><i>e</i><i><b style="margin-left:-0.00px;margin-right:-0.00px;transform:scaleX(0.933)">n</b></i><i><b style="margin-left:-0.00px;margin-right:-0.00px;transform:scaleX(0.933)">d</b></i><i> </i><i><b style="margin-left:-0.00px;margin-right:-0.00px;transform:scaleX(0.933)">n</b></i><i>e</i><i><b style="margin-left:-1.34px;margin-right:-1.34px;transform:scaleX(0.646)">w</b></i><i> </i><i><b style="margin-left:-0.66px;margin-right:-0.66px;transform:scaleX(0.764)">T</b></i><i><b style="margin-left:-2.66px;margin-right:-2.66px;transform:scaleX(0.494)">W</b></i><i><b style="margin-left:-0.34px;margin-right:-0.34px;transform:scaleX(0.839)">S</b></i><i>e</i><i>r</i><i><b style="margin-left:-0.00px;margin-right:-0.00px;transform:scaleX(0.933)">v</b></i><i>e</i><i>r</i></div>
</body></html>
